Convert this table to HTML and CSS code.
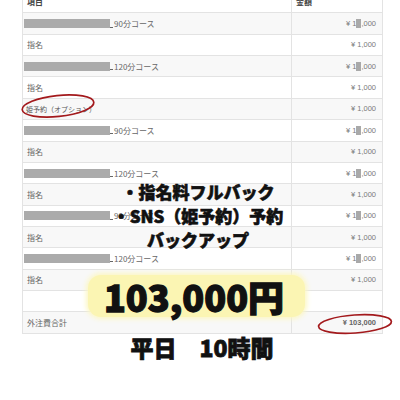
FILE: index.html
```html
<!DOCTYPE html>
<html lang="ja">
<head>
<meta charset="utf-8">
<link rel="stylesheet" href="styles.css">
</head>
<body>
<div class="page">
  <div class="tbl">
    <div class="row head"><div class="c1">項目</div><div class="c2 h2">金額</div></div>
    <div class="tbody">
      <div class="row"><div class="c1"><span class="mask"></span><span class="us"></span>90分コース</div><div class="c2">¥ 1<span class="blk">0</span>,000</div></div>
      <div class="row"><div class="c1">指名</div><div class="c2">¥ 1,000</div></div>
      <div class="row"><div class="c1"><span class="mask"></span><span class="us"></span>120分コース</div><div class="c2">¥ 1<span class="blk">0</span>,000</div></div>
      <div class="row"><div class="c1">指名</div><div class="c2">¥ 1,000</div></div>
      <div class="row"><div class="c1 small">姫予約（オプション）</div><div class="c2">¥ 1,000</div></div>
      <div class="row"><div class="c1"><span class="mask"></span><span class="us"></span>90分コース</div><div class="c2">¥ 1<span class="blk">0</span>,000</div></div>
      <div class="row"><div class="c1">指名</div><div class="c2">¥ 1,000</div></div>
      <div class="row"><div class="c1"><span class="mask"></span><span class="us"></span>120分コース</div><div class="c2">¥ 1<span class="blk">0</span>,000</div></div>
      <div class="row"><div class="c1">指名</div><div class="c2">¥ 1,000</div></div>
      <div class="row"><div class="c1"><span class="mask"></span><span class="us"></span>90分コース</div><div class="c2">¥ 1<span class="blk">0</span>,000</div></div>
      <div class="row"><div class="c1">指名</div><div class="c2">¥ 1,000</div></div>
      <div class="row"><div class="c1"><span class="mask"></span><span class="us"></span>120分コース</div><div class="c2">¥ 1<span class="blk">0</span>,000</div></div>
      <div class="row"><div class="c1">指名</div><div class="c2">¥ 1,000</div></div>
      <div class="row"><div class="c1"></div><div class="c2"></div></div>
      <div class="row"><div class="c1">外注費合計</div><div class="c2 total">¥ 103,000</div></div>
    </div>
  </div>

  <svg class="marks" width="400" height="400" viewBox="0 0 400 400">
    <ellipse cx="58" cy="106" rx="36" ry="10.5" transform="rotate(-6 58 106)" fill="none" stroke="#a3191c" stroke-width="1.7"/>
    <ellipse cx="355" cy="324" rx="36.5" ry="9" transform="rotate(-4 355 324)" fill="none" stroke="#a3191c" stroke-width="1.7"/>
  </svg>

  <div class="promo">
    <div class="line">・指名料フルバック</div>
    <div class="line">・SNS（姫予約）予約</div>
    <div class="line">バックアップ</div>
  </div>

  <div class="price"><span>103,000円</span></div>
  <div class="time">平日　10時間</div>
</div>
</body>
</html>
```
FILE: styles.css
```css
* { box-sizing: border-box; }
html, body { margin: 0; padding: 0; background: #fff; }
body { font-family: "Liberation Sans", "Noto Sans CJK JP", sans-serif; }

.page {
  position: relative;
  width: 400px;
  height: 400px;
  overflow: hidden;
  background: #fff;
}

.tbl {
  margin: -9px 0 0 22px;
  width: 361px;
  border-left: 1px solid #e3e3e3;
  border-right: 1px solid #e3e3e3;
  border-bottom: 1px solid #e3e3e3;
}

.row {
  display: grid;
  grid-template-columns: 268px 1fr;
  height: 21.37px;
  border-top: 1px solid #e3e3e3;
}
.head { border-top: none; background: #fff; }
.tbody .row:nth-child(odd) { background: #f8f8f8; }
.tbody .row:nth-child(even) { background: #fff; }

.c1 {
  display: flex;
  align-items: center;
  padding-left: 4px;
  font-family: "Noto Sans CJK JP", sans-serif;
  font-size: 8px;
  color: #666;
  white-space: nowrap;
}
.c1.small { font-size: 7px; padding-left: 3px; color: #555; }
.head .c1, .head .c2 { font-weight: bold; color: #444; font-size: 8px; }

.c2 {
  display: flex;
  align-items: center;
  justify-content: flex-end;
  padding-right: 6px;
  border-left: 1px solid #e3e3e3;
  font-size: 7.5px;
  color: #7a7a7a;
  white-space: nowrap;
}
.head .c2.h2 { justify-content: flex-start; padding-left: 4px; font-family: "Noto Sans CJK JP", sans-serif; }
.c2.total { font-weight: bold; color: #666; }

.mask {
  display: inline-block;
  width: 86px;
  height: 9px;
  margin-left: -3px;
  background: #ababab;
}
.us {
  display: inline-block;
  width: 3px;
  height: 1px;
  margin-top: 7px;
  margin-right: 1px;
  background: #666;
}
.blk {
  display: inline-block;
  width: 5px;
  height: 9px;
  background: #a9a9a9;
  color: transparent;
  overflow: hidden;
  line-height: 9px;
}

.marks { position: absolute; left: 0; top: 0; }

.promo {
  position: absolute;
  left: 0;
  top: 180px;
  width: 396px;
  text-align: center;
  font-family: "Noto Sans CJK JP", sans-serif;
  font-weight: 900;
  font-size: 17px;
  line-height: 24px;
  color: #111;
  -webkit-text-stroke: 0.6px #111;
}

.price {
  position: absolute;
  left: 88px;
  top: 275px;
  width: 217px;
  height: 42px;
  border-radius: 13px;
  background: #fbf5b3;
  box-shadow: 0 0 5px 2px #fcf7c4;
  display: flex;
  align-items: center;
  justify-content: center;
  padding-right: 5px;
  font-family: "Noto Sans CJK JP", sans-serif;
  font-weight: 900;
  font-size: 36px;
  line-height: 1;
  color: #111;
  -webkit-text-stroke: 1.3px #111;
}

.time {
  position: absolute;
  left: 0;
  top: 333px;
  width: 404px;
  text-align: center;
  font-family: "Noto Sans CJK JP", sans-serif;
  font-weight: 900;
  font-size: 23px;
  line-height: 28px;
  color: #111;
  -webkit-text-stroke: 0.8px #111;
}
```
